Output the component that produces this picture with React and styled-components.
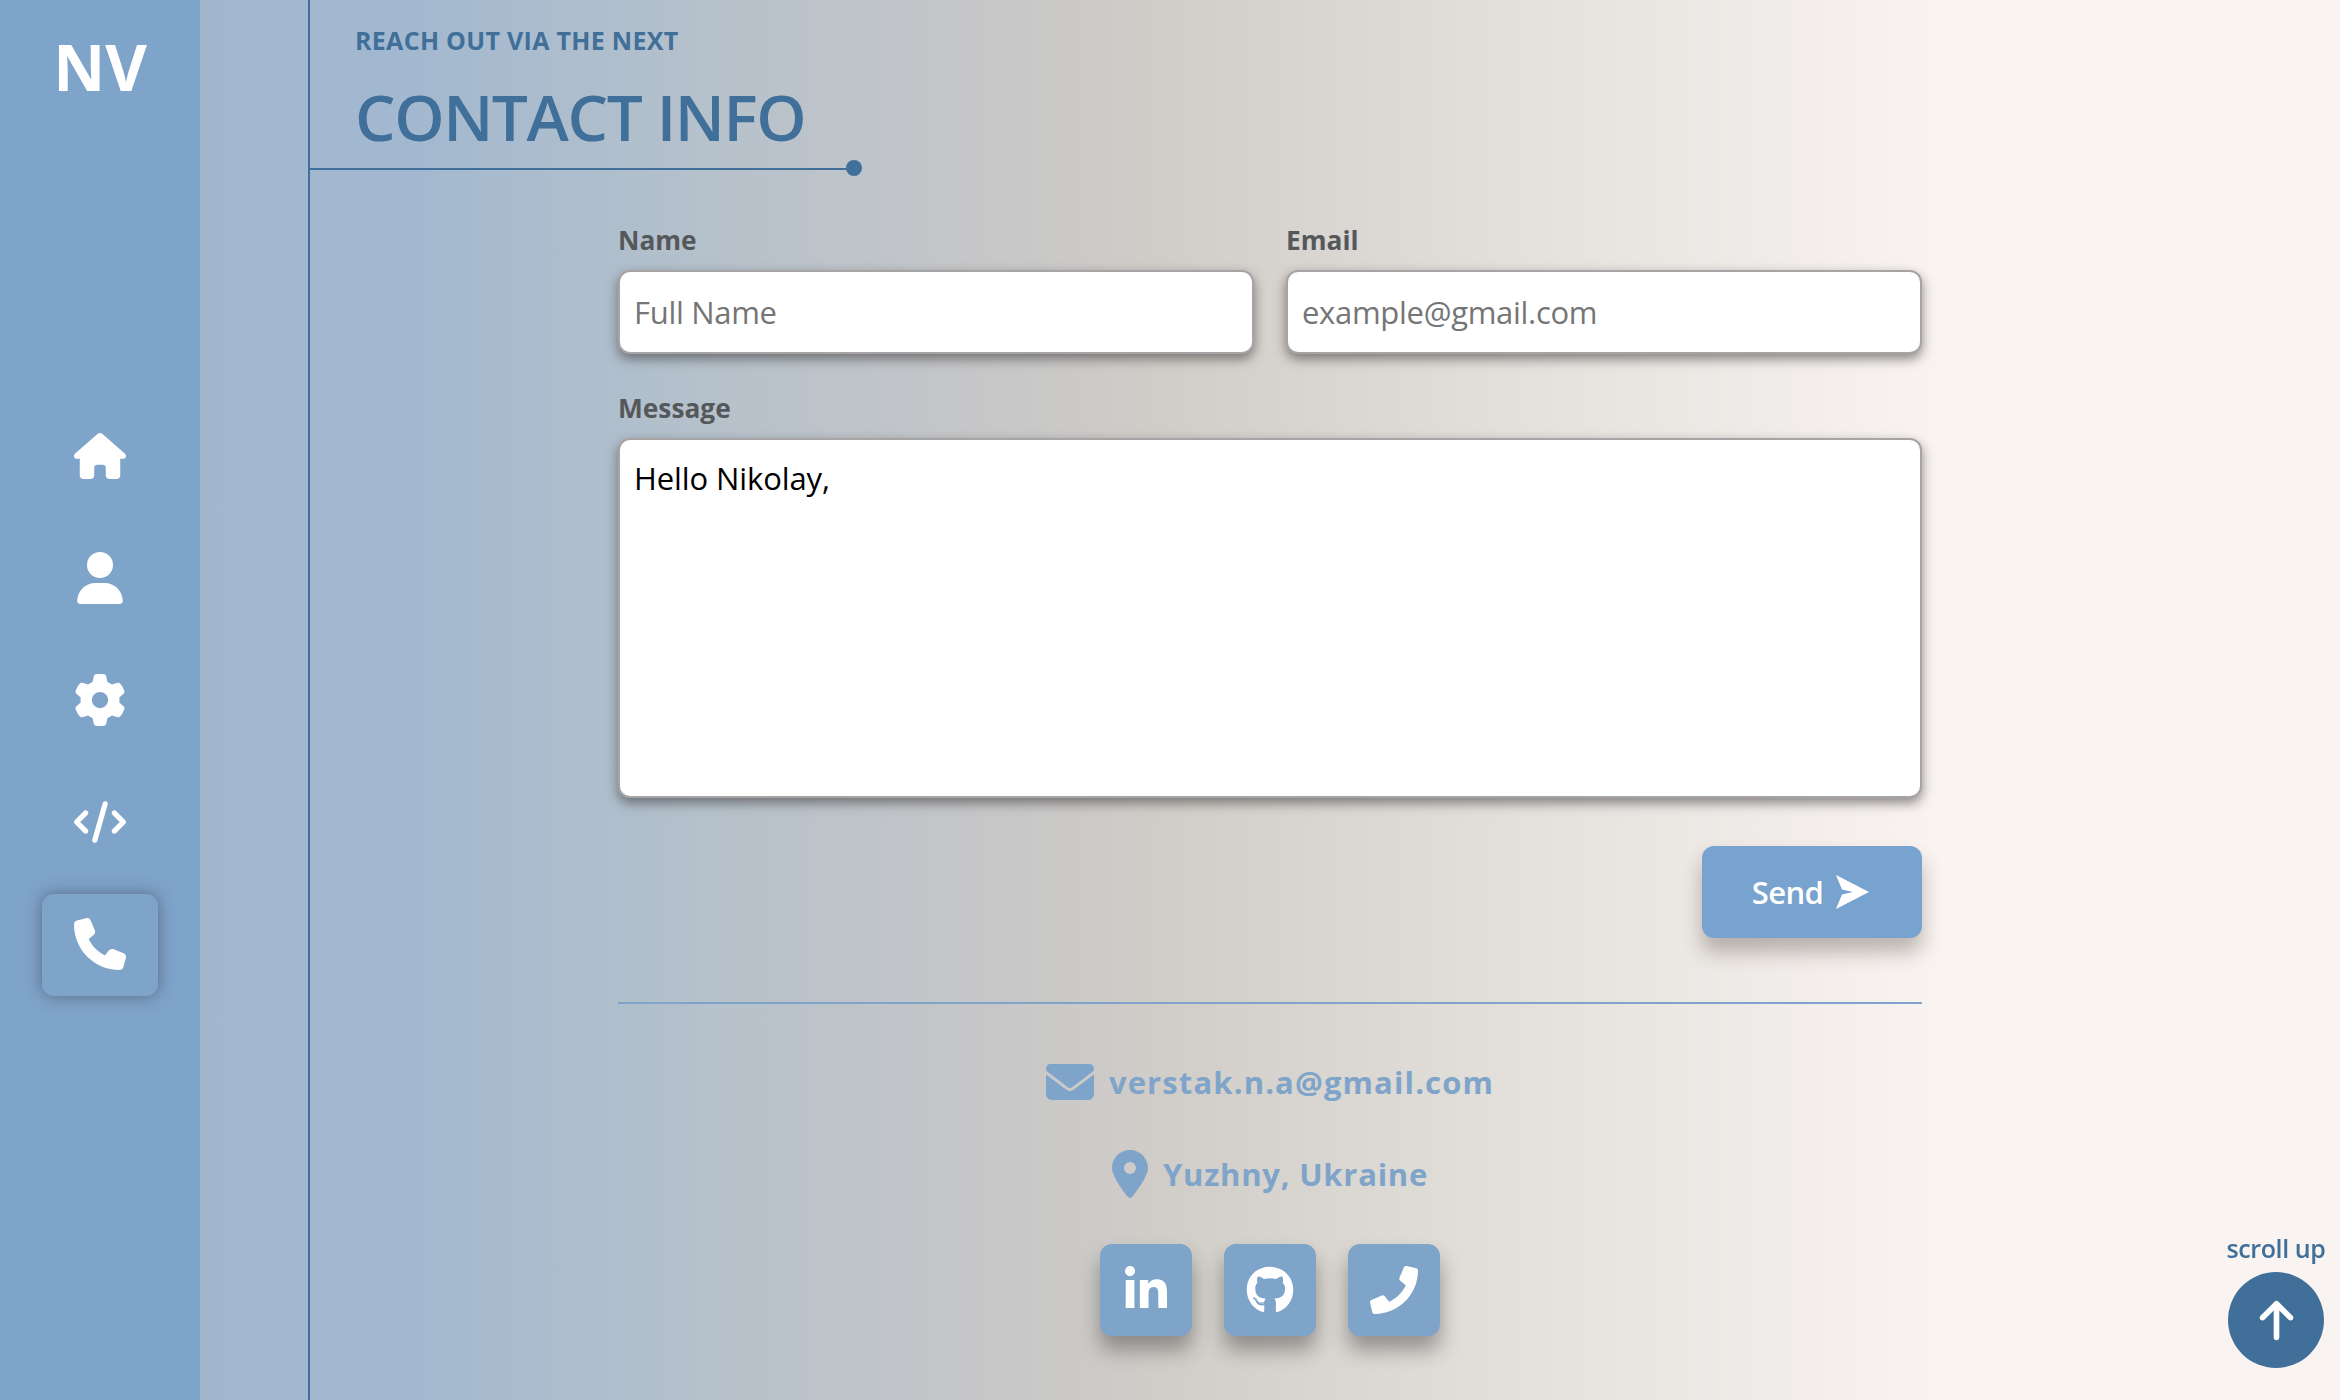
import React from "react";
import styled, { createGlobalStyle, css } from "styled-components";
import { FaHouse, FaUser, FaGear, FaCode, FaPhone, FaEnvelope, FaLocationDot, FaLinkedinIn, FaGithub, FaArrowUp } from "react-icons/fa6";
import { FaPhone as FaPhoneClassic } from "react-icons/fa";

const blue = "#7fa4c9";
const deep = "#406f99";

const GlobalStyle = createGlobalStyle`
  * { box-sizing: border-box; }
  body { margin: 0; font-family: "Segoe UI", "Open Sans", "Noto Sans", sans-serif; }
`;

const Page = styled.div`
  display: flex;
  width: 100%;
  height: 100vh;
  overflow: hidden;
  background: linear-gradient(90deg, #a2b7cd 8%, #a2b8d0 17%, #b5c1cb 30%, #c5c6c8 41%, #d1cdc8 50%, #e5e1dd 66%, #f9f4f1 83%);
`;

const Sidebar = styled.nav`
  width: 200px;
  flex: none;
  display: flex;
  flex-direction: column;
  align-items: center;
  padding-top: 23px;
  background: ${blue};
`;

const Logo = styled.div`
  height: 88px;
  line-height: 88px;
  font-size: 64px;
  font-weight: 700;
  color: #fff;
`;

const NavList = styled.div`
  display: flex;
  flex-direction: column;
  gap: 20px;
  margin-top: 295px;
`;

const NavItem = styled.a`
  display: flex;
  align-items: center;
  justify-content: center;
  width: 116px;
  height: 102px;
  padding-bottom: 2px;
  border-radius: 12px;
  color: #fff;
  font-size: 52px;
  ${(p) => p.$active && css`box-shadow: 0 0 16px rgba(60, 65, 85, 0.6);`}
`;

const Gutter = styled.div`
  width: 108px;
  flex: none;
`;

const Main = styled.main`
  flex: 1;
  border-left: 2px solid ${deep};
`;

const Header = styled.header`
  width: 544px;
  height: 170px;
  padding: 22px 0 0 45px;
  border-bottom: 2px solid ${deep};
  position: relative;
  color: ${deep};
  white-space: nowrap;
  &::after {
    content: "";
    position: absolute;
    right: -8px;
    bottom: -8px;
    width: 16px;
    height: 16px;
    border-radius: 50%;
    background: ${deep};
  }
`;

const Eyebrow = styled.div`
  font-size: 25px;
  line-height: 36px;
  font-weight: 700;
  letter-spacing: 0.3px;
`;

const Title = styled.h1`
  margin: 15px 0 0;
  font-size: 64px;
  line-height: 88px;
  font-weight: 600;
  letter-spacing: -1.4px;
`;

const Content = styled.div`
  width: 1304px;
  margin: 53px 0 0 308px;
  display: flex;
  flex-direction: column;
`;

const Fields = styled.div`
  display: grid;
  grid-template-columns: 1fr 1fr;
  column-gap: 32px;
  row-gap: 37px;
`;

const Field = styled.label`
  display: flex;
  flex-direction: column;
  grid-column: ${(p) => (p.$wide ? "1 / -1" : "auto")};
`;

const LabelText = styled.span`
  font-size: 26.3px;
  line-height: 35px;
  height: 47px;
  font-weight: 700;
  color: #55585b;
`;

const control = css`
  width: 100%;
  border: 2px solid #a6a4a4;
  border-radius: 12px;
  background: #fff;
  outline: none;
  resize: none;
  font-family: inherit;
  font-size: 31px;
  line-height: 42px;
  color: #000;
  box-shadow: 0 5px 12px rgba(50, 45, 45, 0.55);
  display: block;
`;

const Input = styled.input`
  ${control}
  height: 84px;
  padding: 0 14px;
  letter-spacing: -0.3px;
  &::placeholder { color: #757575; opacity: 1; }
`;

const TextArea = styled.textarea`
  ${control}
  height: 360px;
  padding: 17px 14px;
  letter-spacing: -0.1px;
`;

const SendButton = styled.button`
  align-self: flex-end;
  display: flex;
  align-items: center;
  justify-content: center;
  gap: 12px;
  width: 220px;
  height: 92px;
  margin-top: 48px;
  padding: 0 8px 0 5px;
  border: 0;
  border-radius: 12px;
  background: #78a3cf;
  box-shadow: 0 14px 20px rgba(60, 50, 45, 0.32);
  color: #fff;
  font-family: inherit;
  font-size: 31px;
  font-weight: 600;
  letter-spacing: -0.6px;
`;

const Divider = styled.hr`
  width: 100%;
  height: 2px;
  margin: 64px 0 0;
  border: 0;
  background: ${blue};
`;

const Contacts = styled.div`
  display: flex;
  flex-direction: column;
  align-items: center;
`;

const ContactLine = styled.a`
  display: flex;
  align-items: center;
  gap: 15px;
  height: 48px;
  margin-top: ${(p) => p.$top}px;
  color: ${blue};
  font-size: 31px;
  font-weight: 700;
  letter-spacing: ${(p) => p.$track}px;
  white-space: nowrap;
  svg { font-size: 48px; flex: none; }
`;

const PinIcon = styled(FaLocationDot)`
  width: 36px;
`;

const Socials = styled.div`
  display: flex;
  gap: 32px;
  margin-top: 46px;
`;

const SocialButton = styled.a`
  width: 92px;
  height: 92px;
  display: flex;
  align-items: center;
  justify-content: center;
  border-radius: 12px;
  background: ${blue};
  box-shadow: 0 14px 20px rgba(45, 40, 40, 0.4);
  color: #fff;
  font-size: 48px;
`;

const ScrollUp = styled.a`
  position: fixed;
  right: 16px;
  bottom: 32px;
  width: 96px;
  display: flex;
  flex-direction: column;
  align-items: center;
  gap: 7px;
  color: ${deep};
  font-size: 25px;
  line-height: 34px;
  font-weight: 600;
  letter-spacing: -0.4px;
  white-space: nowrap;
`;

const ScrollCircle = styled.span`
  width: 96px;
  height: 96px;
  display: flex;
  align-items: center;
  justify-content: center;
  border-radius: 50%;
  background: ${deep};
  color: #fff;
  font-size: 45px;
`;

const SendIcon = () => (
  <svg width="34" height="36" viewBox="0 0 34 36" fill="#fff">
    <path d="M1 1 L34 18 L1 35 L7 20.5 L18 18 L7 15.5 Z" />
  </svg>
);

const navItems = [FaHouse, FaUser, FaGear, FaCode, FaPhone];
const socials = [FaLinkedinIn, FaGithub, FaPhoneClassic];

export default function App() {
  return (
    <Page>
      <GlobalStyle />
      <Sidebar>
        <Logo>NV</Logo>
        <NavList>
          {navItems.map((Icon, i) => (
            <NavItem key={i} $active={i === navItems.length - 1}><Icon /></NavItem>
          ))}
        </NavList>
      </Sidebar>
      <Gutter />
      <Main>
        <Header>
          <Eyebrow>REACH OUT VIA THE NEXT</Eyebrow>
          <Title>CONTACT INFO</Title>
        </Header>
        <Content>
          <Fields>
            <Field>
              <LabelText>Name</LabelText>
              <Input placeholder="Full Name" />
            </Field>
            <Field>
              <LabelText>Email</LabelText>
              <Input placeholder="example@gmail.com" />
            </Field>
            <Field $wide>
              <LabelText>Message</LabelText>
              <TextArea defaultValue="Hello Nikolay," />
            </Field>
          </Fields>
          <SendButton>Send<SendIcon /></SendButton>
          <Divider />
          <Contacts>
            <ContactLine $top={54} $track={1.13}><FaEnvelope />verstak.n.a@gmail.com</ContactLine>
            <ContactLine $top={44} $track={0.76}><PinIcon />Yuzhny, Ukraine</ContactLine>
            <Socials>
              {socials.map((Icon, i) => (
                <SocialButton key={i}><Icon /></SocialButton>
              ))}
            </Socials>
          </Contacts>
        </Content>
      </Main>
      <ScrollUp>
        scroll up
        <ScrollCircle><FaArrowUp /></ScrollCircle>
      </ScrollUp>
    </Page>
  );
}
